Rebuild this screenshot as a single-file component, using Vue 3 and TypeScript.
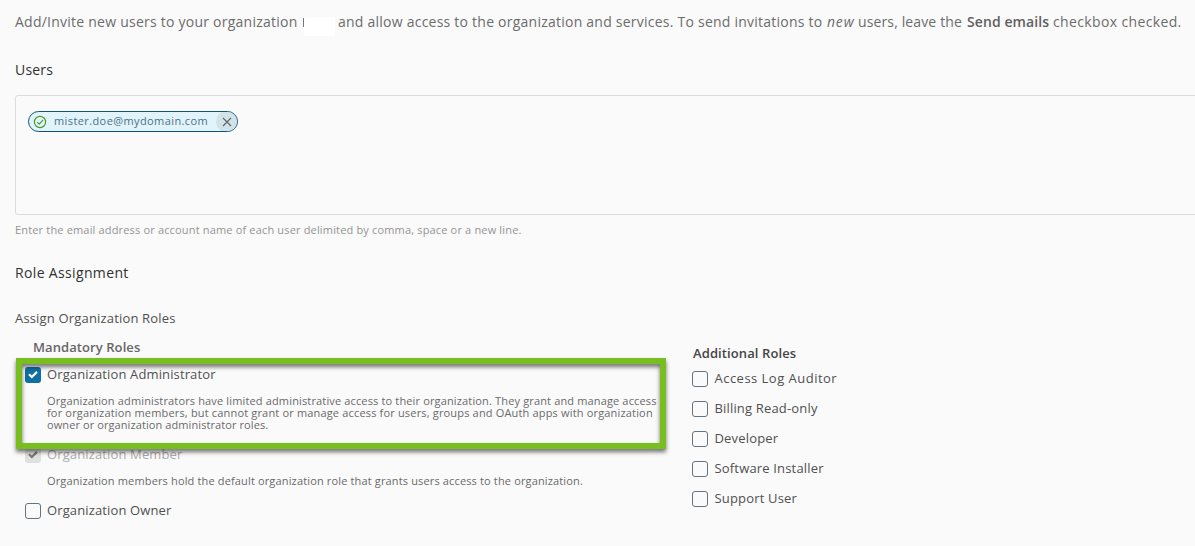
<script setup lang="ts">
import { ref } from 'vue'

interface Role {
  id: string
  name: string
  checked: boolean
  disabled?: boolean
  description?: string[]
}

const email = ref('mister.doe@mydomain.com')

const mandatoryRoles = ref<Role[]>([
  {
    id: 'admin',
    name: 'Organization Administrator',
    checked: true,
    description: [
      'Organization administrators have limited administrative access to their organization. They grant and manage access',
      'for organization members, but cannot grant or manage access for users, groups and OAuth apps with organization',
      'owner or organization administrator roles.',
    ],
  },
  {
    id: 'member',
    name: 'Organization Member',
    checked: true,
    disabled: true,
    description: ['Organization members hold the default organization role that grants users access to the organization.'],
  },
  { id: 'owner', name: 'Organization Owner', checked: false },
])

const additionalRoles = ref<Role[]>([
  { id: 'auditor', name: 'Access Log Auditor', checked: false },
  { id: 'billing', name: 'Billing Read-only', checked: false },
  { id: 'developer', name: 'Developer', checked: false },
  { id: 'installer', name: 'Software Installer', checked: false },
  { id: 'support', name: 'Support User', checked: false },
])

function toggle(role: Role) {
  if (!role.disabled) role.checked = !role.checked
}
</script>

<template>
  <main class="page">
    <p class="intro">
      <span class="seg seg-a">Add/Invite new users to your organization</span>
      <span class="redacted"></span>
      <span class="seg seg-b">and allow access to the organization and services. To send invitations to</span>
      <em class="seg seg-c">new</em>
      <span class="seg seg-d">users, leave the</span>
      <strong class="seg seg-e">Send emails</strong>
      <span class="seg seg-f">checkbox checked.</span>
    </p>

    <h2 class="heading users">Users</h2>
    <div class="entry">
      <span class="chip">
        <svg class="ok" viewBox="0 0 14 14" width="14" height="14">
          <circle cx="7" cy="7" r="5.6" />
          <path d="M4.2 7.2 6.2 9.2 10 5.2" />
        </svg>
        <span class="chip-text">{{ email }}</span>
        <span class="chip-close">
          <svg viewBox="0 0 10 10" width="10" height="10"><path d="M1 1 9 9M9 1 1 9" /></svg>
        </span>
      </span>
    </div>
    <p class="helper">Enter the email address or account name of each user delimited by comma, space or a new line.</p>

    <h2 class="heading assignment">Role Assignment</h2>
    <p class="sub">Assign Organization Roles</p>

    <div class="columns">
      <section class="mandatory">
        <h3 class="group">Mandatory Roles</h3>
        <div v-for="role in mandatoryRoles" :key="role.id" class="role" :class="{ disabled: role.disabled }">
          <div class="row" @click="toggle(role)">
            <span class="box" :class="{ on: role.checked }">
              <svg v-if="role.checked" viewBox="0 0 16 16" width="16" height="16"><path d="M4 7.3 6.8 10 12 4.9" /></svg>
            </span>
            <span class="label">{{ role.name }}</span>
          </div>
          <div v-if="role.description" class="desc">
            <div v-for="(line, i) in role.description" :key="i" :class="`line-${i}`">{{ line }}</div>
          </div>
        </div>
        <div class="highlight"></div>
      </section>

      <section class="additional">
        <h3 class="group">Additional Roles</h3>
        <div v-for="role in additionalRoles" :key="role.id" class="row" :class="role.id" @click="toggle(role)">
          <span class="box" :class="{ on: role.checked }">
            <svg v-if="role.checked" viewBox="0 0 16 16" width="16" height="16"><path d="M4 7.3 6.8 10 12 4.9" /></svg>
          </span>
          <span class="label">{{ role.name }}</span>
        </div>
      </section>
    </div>
  </main>
</template>

<style>
html,
body {
  background: #fafafa;
  overflow: hidden;
}
</style>

<style scoped>
.page {
  box-sizing: border-box;
  width: 1195px;
  height: 546px;
  padding: 10px 0 0 15px;
  overflow: hidden;
  background: #fafafa;
  font-family: "Open Sans", "Noto Sans", sans-serif;
  color: #505050;
}
p, h2, h3 {
  margin: 0;
  font-weight: 400;
}
.intro {
  display: flex;
  height: 24px;
  line-height: 24px;
  font-size: 14px;
  color: #6c6c6c;
  white-space: nowrap;
}
.seg { flex: none; }
.seg-a { width: 288px; letter-spacing: 0.24px; }
.redacted {
  box-sizing: border-box;
  flex: none;
  width: 32px;
  height: 19px;
  margin: 7px 3px 0 0;
  background: linear-gradient(#777, #777) 0 1px / 1px 9px no-repeat, linear-gradient(#fff, #fff) 1px 0 / 31px 19px no-repeat;
}
.seg-b { width: 489px; letter-spacing: 0.235px; }
.seg-c { width: 31px; letter-spacing: 0.8px; }
.seg-d { width: 109px; letter-spacing: 0.13px; }
.seg-e { width: 86px; font-weight: 600; letter-spacing: 0.08px; color: #606060; }
.seg-f { letter-spacing: 0.36px; }
.heading {
  height: 24px;
  line-height: 24px;
  font-size: 14px;
  letter-spacing: 0.35px;
  color: #313131;
}
.users { margin-top: 24px; letter-spacing: 0.2px; }
.entry {
  box-sizing: border-box;
  width: 1190px;
  height: 120px;
  margin-top: 13px;
  padding: 15px 12px;
  border: 1px solid #dcdcdc;
  border-radius: 3px;
}
.chip {
  box-sizing: border-box;
  display: flex;
  align-items: center;
  width: 210px;
  height: 21px;
  border: 1px solid #0f5579;
  border-radius: 11px;
  background: #e1f3fb;
  overflow: hidden;
}
.ok {
  flex: none;
  margin-left: 4px;
  fill: none;
  stroke: #4f9a2c;
  stroke-width: 1.2;
}
.chip-text {
  flex: none;
  width: 162px;
  margin: -2px 0 0 7px;
  font-size: 11px;
  line-height: 15px;
  letter-spacing: 0.4px;
  color: #4e7186;
}
.chip-close {
  display: flex;
  align-items: center;
  justify-content: center;
  width: 21px;
  height: 21px;
  border-radius: 50%;
  background: #d3e2e9;
}
.chip-close svg {
  fill: none;
  stroke: #566;
  stroke-width: 1.1;
}
.helper {
  height: 16px;
  margin-top: 7px;
  line-height: 16px;
  font-size: 11px;
  letter-spacing: 0.165px;
  color: #949494;
  white-space: nowrap;
}
.assignment { margin-top: 23px; }
.sub {
  height: 25px;
  margin-top: 21px;
  line-height: 24px;
  font-size: 13px;
  letter-spacing: 0.17px;
}
.columns {
  display: flex;
}
.mandatory {
  position: relative;
  flex: none;
  width: 667px;
  padding: 6px 0 0 10px;
}
.group {
  height: 20px;
  line-height: 20px;
  font-size: 13px;
  font-weight: 600;
  letter-spacing: 0.08px;
}
.mandatory .group {
  margin: 0 0 6px 8px;
  color: #666;
}
.role { margin-bottom: 12px; }
.row {
  display: flex;
  align-items: center;
  height: 24px;
}
.box {
  box-sizing: border-box;
  flex: none;
  width: 16px;
  height: 16px;
  border: 1px solid #64747e;
  border-radius: 3px;
}
.box.on {
  border: 0;
  background: #0f6fa0;
}
.box svg {
  display: block;
  fill: none;
  stroke: #fff;
  stroke-width: 2.2;
}
.label {
  margin-left: 6px;
  padding-bottom: 2px;
  line-height: 22px;
  font-size: 13px;
  letter-spacing: 0.13px;
  white-space: nowrap;
}
.disabled .label { color: #aaa; }
.disabled .box { background: #e0e0e0; }
.disabled .box svg { stroke: #777; }
.desc {
  margin: 8px 0 0 22px;
  font-size: 11px;
  line-height: 12px;
  letter-spacing: 0.148px;
  color: #6a6a6a;
  white-space: nowrap;
}
.desc .line-1 { letter-spacing: 0.17px; }
.desc .line-2 { letter-spacing: 0.09px; }
.highlight {
  position: absolute;
  box-sizing: border-box;
  left: 1px;
  top: 27px;
  width: 650px;
  height: 91px;
  border: 6px solid #78be20;
  filter: drop-shadow(0 3px 2px rgba(0, 0, 0, 0.55));
  pointer-events: none;
}
.additional { padding-top: 12px; }
.additional .group { margin: 0 0 4px 1px; letter-spacing: 0.1px; color: #454545; }
.additional .row { margin-bottom: 6px; }
.additional .label { margin-left: 6.5px; letter-spacing: 0.17px; }
.additional .auditor .label { letter-spacing: 0.48px; }
</style>
